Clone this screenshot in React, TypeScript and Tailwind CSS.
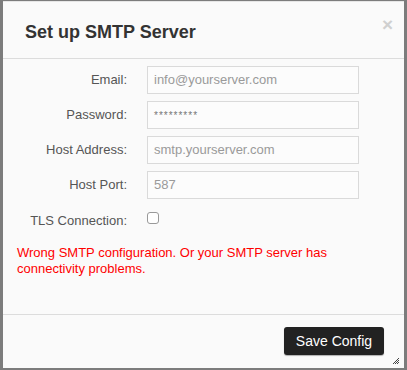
import { useState } from 'react';

const fields = [
  { label: 'Email:', value: 'info@yourserver.com', type: 'text' },
  { label: 'Password:', value: '*********', type: 'password' },
  { label: 'Host Address:', value: 'smtp.yourserver.com', type: 'text' },
  { label: 'Host Port:', value: '587', type: 'text' },
];

export default function App() {
  const [tls, setTls] = useState(false);

  return (
    <div className="w-[407px] h-[370px] bg-[#7c7c7c] pl-[3px] pt-[1px] font-['Liberation_Sans',Arial,sans-serif]">
      <div className="relative w-[401px] h-[367px] bg-[#fafafa] border-t border-[#e6e6e6] flex flex-col">
        <button className="absolute right-[11px] top-[13px] text-[#d0d0d0] text-[19px] font-bold leading-none">
          ×
        </button>

        <div className="h-[57px] border-b border-[#dcdcdc] pl-[22px] pt-[19px]">
          <h2 className="text-[18px] font-bold text-[#333] leading-[22px]">
            Set up SMTP Server
          </h2>
        </div>

        <div className="flex-1 pt-[7px]">
          <div className="flex flex-col gap-[7px]">
            {fields.map((f) => (
              <div key={f.label} className="flex items-center">
                <label className="w-[124px] text-right text-[13px] text-[#555]">
                  {f.label}
                </label>
                <div className="ml-[20px] w-[212px] h-[28px] border border-[#dadada] bg-[#fcfcfc] px-[6px] flex items-center text-[13px] text-[#9a9a9a]">
                  {f.type === 'password' ? (
                    <span className="text-[10px] tracking-[1px] text-[#777]">{f.value}</span>
                  ) : (
                    f.value
                  )}
                </div>
              </div>
            ))}
            <div className="flex items-center mt-[5px]">
              <label className="w-[124px] text-right text-[13px] text-[#555]">
                TLS Connection:
              </label>
              <input
                type="checkbox"
                checked={tls}
                onChange={() => setTls(!tls)}
                className="ml-[20px] -mt-[6px] w-[12px] h-[12px] appearance-none border border-[#999] rounded-[3px] bg-white"
              />
            </div>
          </div>

          <p className="mt-[14px] px-[14px] text-[13px] leading-[16px] text-[#ff0000]">
            Wrong SMTP configuration. Or your SMTP server has connectivity problems.
          </p>
        </div>

        <div className="h-[54px] border-t border-[#dcdcdc] flex justify-end items-start pt-[12px] pr-[20px]">
          <button className="w-[100px] h-[28px] bg-[#222] rounded-[3px] text-white text-[14px] shadow-[0_1px_1px_rgba(0,0,0,0.3)]">
            Save Config
          </button>
        </div>

        <svg className="absolute right-[4px] bottom-[3px]" width="8" height="8" viewBox="0 0 8 8">
          <path d="M7 1L1 7M7 3L3 7M7 5L5 7" stroke="#444" strokeWidth="1" />
        </svg>
      </div>
    </div>
  );
}
